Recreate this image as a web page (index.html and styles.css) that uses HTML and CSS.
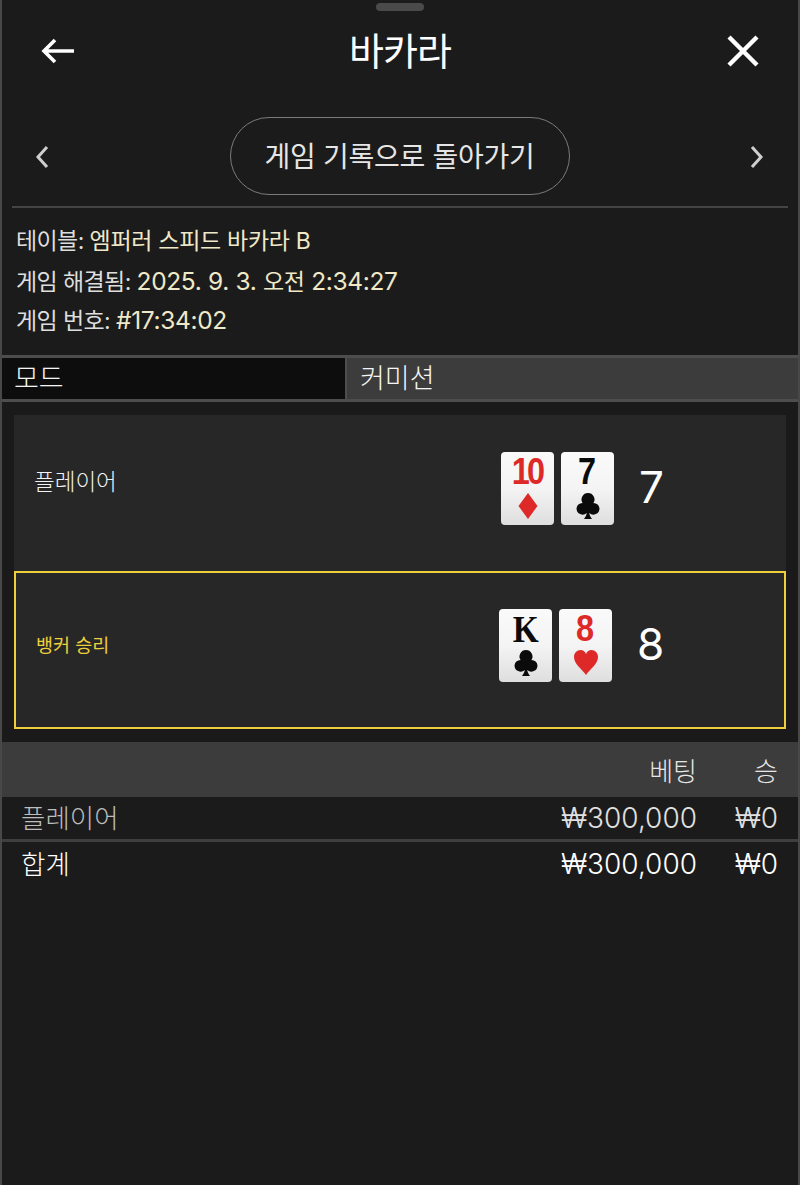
FILE: index.html
```html
<!DOCTYPE html>
<html lang="ko">
<head>
<meta charset="utf-8">
<title>바카라</title>
<link rel="stylesheet" href="styles.css">
</head>
<body>
<main class="sheet">
  <div class="handle-row"><span class="handle"></span></div>
  <header class="topbar">
    <svg class="icon-back" viewBox="0 0 34 26" width="34" height="26"><path d="M33 13H3M14 2 3 13l11 11" fill="none" stroke="#fff" stroke-width="3.6"/></svg>
    <h1 class="title">바카라</h1>
    <svg class="icon-close" viewBox="0 0 32 32" width="32" height="32"><path d="M2 2 30 30M30 2 2 30" fill="none" stroke="#fff" stroke-width="4.4"/></svg>
  </header>
  <nav class="navrow">
    <svg class="chev" viewBox="0 0 14 24" width="14" height="24"><path d="M12 2 3 12l9 10" fill="none" stroke="#cfcfcf" stroke-width="3"/></svg>
    <button class="pill">게임 기록으로 돌아가기</button>
    <svg class="chev" viewBox="0 0 14 24" width="14" height="24"><path d="M2 2l9 10-9 10" fill="none" stroke="#cfcfcf" stroke-width="3"/></svg>
  </nav>
  <hr class="rule">
  <section class="info">
    <p>테이블: <span class="val val-ko">엠퍼러 스피드 바카라 B</span></p>
    <p>게임 해결됨: <span class="val">2025. 9. 3. <span class="val-ko">오전</span> 2:34:27</span></p>
    <p>게임 번호: <span class="val">#17:34:02</span></p>
  </section>
  <div class="tabs">
    <div class="tab tab-on">모드</div>
    <div class="tab tab-off">커미션</div>
  </div>
  <section class="hands">
    <div class="hand hand-player">
      <div class="hand-label">플레이어</div>
      <div class="cards">
        <div class="card red"><span class="rank rank-ten">10</span><svg class="suit" viewBox="0 0 24 26"><path d="M12 0 21.500 13 12 26 2.500 13Z"/></svg></div>
        <div class="card black"><span class="rank">7</span><svg class="suit" viewBox="0 0 24 26"><use href="#club"/></svg></div>
      </div>
      <div class="score">7</div>
    </div>
    <div class="hand hand-banker">
      <div class="hand-label win">뱅커 승리</div>
      <div class="cards">
        <div class="card black"><span class="rank rank-k">K</span><svg class="suit" viewBox="0 0 24 26"><use href="#club"/></svg></div>
        <div class="card red"><span class="rank">8</span><svg class="suit" viewBox="0 0 24 26"><path d="M12 25C8 19 0 14 0 7 0 3 3 0 6.500 0 9 0 11 1.500 12 4 13 1.500 15 0 17.500 0 21 0 24 3 24 7 24 14 16 19 12 25Z"/></svg></div>
      </div>
      <div class="score">8</div>
    </div>
  </section>
  <section class="bets">
    <div class="bets-row bets-head"><span class="c-name"></span><span class="c-bet">베팅</span><span class="c-win">승</span></div>
    <div class="bets-row bets-item"><span class="c-name">플레이어</span><span class="c-bet">₩300,000</span><span class="c-win">₩0</span></div>
    <div class="bets-row bets-total"><span class="c-name">합계</span><span class="c-bet">₩300,000</span><span class="c-win">₩0</span></div>
  </section>
</main>
<svg class="defs" width="0" height="0"><defs><path id="club" d="M12 0a6.500 6.500 0 0 0-5.400 10.100A6.300 6.300 0 0 0 .5 15.500a6.200 6.200 0 0 0 10.300 4.600C10.500 22 9.500 24 8 26h8c-1.500-2-2.500-4-2.800-5.900a6.200 6.200 0 0 0 10.300-4.600 6.300 6.300 0 0 0-6.100-5.400A6.500 6.500 0 0 0 12 0Z"/></defs></svg>
</body>
</html>
```
FILE: styles.css
```css
* { box-sizing: border-box; }
html, body { margin: 0; height: 100%; background: #1b1b1b; }
body { font-family: "Inter", "Noto Sans CJK KR", "Noto Sans", sans-serif; color: #fff; }
.defs { position: absolute; }
.sheet { height: 1185px; border-left: 2px solid #484848; border-right: 2px solid #484848; overflow: hidden; background: #1b1b1b; }
.handle-row { display: flex; justify-content: center; padding-top: 3px; height: 11px; }
.handle { width: 48px; height: 8px; border-radius: 4px; background: #4a4a4a; }
.topbar { display: grid; grid-template-columns: 1fr auto 1fr; align-items: center; height: 80px; padding: 0 39px; }
.icon-close { justify-self: end; }
.title { margin: 0; font-size: 38px; font-weight: 400; letter-spacing: -1px; line-height: 1; }
.navrow { display: flex; align-items: center; justify-content: space-between; margin-top: 26px; height: 78px; padding: 0 34px 0 33px; }
.chev { margin-top: 2px; }
.pill { width: 340px; height: 78px; border: 1px solid #7b7b7b; border-radius: 39px; background: transparent; color: #e6e6e6; font: inherit; font-size: 28px; font-weight: 400; letter-spacing: -.3px; padding: 0 0 3px; }
.rule { margin: 11px 10px 0; height: 2px; border: 0; background: #444; }
.info { padding: 14px 0 0 14px; height: 147px; font-size: 23px; font-weight: 400; letter-spacing: -.6px; color: #dedede; }
.info p { margin: 0; height: 39.500px; line-height: 39.500px; white-space: nowrap; }
.val { color: #efe9c8; font-size: 24.500px; letter-spacing: -.35px; }
.val-ko { font-size: 23px; letter-spacing: -.3px; }
.tabs { display: flex; height: 47px; border-top: 3px solid #4d4d4d; border-bottom: 3px solid #4d4d4d; }
.tab { display: flex; align-items: center; padding-bottom: 4px; font-size: 27px; font-weight: 300; color: #f5f5f5; }
.tab-on { width: 343px; padding-left: 12px; background: #0d0d0d; }
.tab-off { flex: 1; padding-left: 13px; background: #3c3c3c; border-left: 2px solid #4d4d4d; }
.hands { padding: 13px 12px; background: #1a1a1a; }
.hand { position: relative; display: flex; background: #272727; }
.hand-player { height: 156px; padding: 37px 0 0 20px; }
.hand-banker { height: 158px; border: 2px solid #eccf3a; padding: 36px 0 0 20px; }
.hand-label { width: 467px; height: 60px; font-size: 22.500px; font-weight: 300; line-height: 60px; color: #f2f2f2; }
.hand-label.win { width: 463px; font-size: 18.500px; font-weight: 400; color: #edd13c; margin-top: 6px; }
.cards { display: flex; gap: 7px; height: 73px; }
.card { width: 53px; height: 73px; border-radius: 4px; background: linear-gradient(#fafafa, #f4f4f4 50%, #dedede); display: flex; flex-direction: column; align-items: center; padding-top: 2px; }
.card.red { color: #dd2a28; fill: #dd2a28; }
.card.black { color: #0b0b0b; fill: #0b0b0b; }
.rank { font-family: "Liberation Sans", sans-serif; font-weight: 700; font-size: 36px; line-height: 36px; height: 36px; transform: scaleX(.9); }
.rank-ten { letter-spacing: -3px; }
.rank-k { font-family: "Liberation Serif", serif; font-size: 38px; transform: scaleX(.88); }
.suit { width: 24px; height: 26px; margin-top: 3px; }
.score { margin: -1px 0 0 25px; font-size: 44px; font-weight: 400; line-height: 73px; height: 73px; }
.bets-row { display: flex; align-items: center; padding: 0 20px 0 19px; font-size: 28px; font-weight: 300; }
.c-name { flex: 1; font-size: 26.500px; }
.c-bet { text-align: right; }
.c-win { width: 81px; text-align: right; }
.bets-head { height: 55px; background: #3c3c3c; color: #e6e6e6; font-size: 26px; }
.bets-item { height: 45px; border-bottom: 3px solid #3f3f3f; color: #e0e0e0; }
.bets-item .c-name { color: #bdbdbd; margin-top: -4px; }
.bets-total { height: 43px; color: #fff; }
.bets-total .c-name { margin-top: -3px; }
```
